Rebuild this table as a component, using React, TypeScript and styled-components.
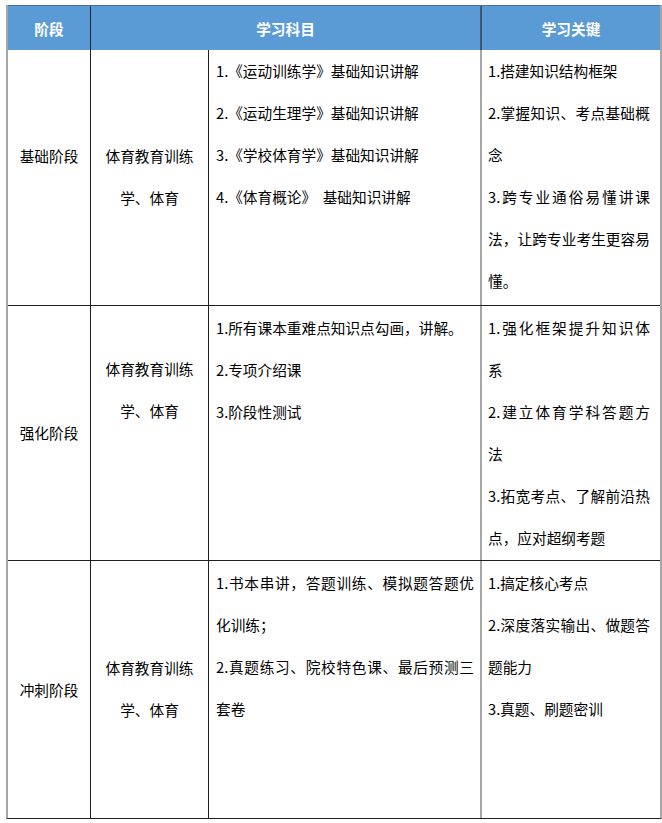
import React from "react";
import styled, { createGlobalStyle } from "styled-components";

const GlobalStyle = createGlobalStyle`
  html, body {
    margin: 0;
    padding: 0;
    background: #ffffff;
  }
  body {
    font-family: "Noto Sans CJK SC", "Noto Sans", sans-serif;
    color: #000000;
  }
  * { box-sizing: border-box; }
`;

const Sheet = styled.div`
  margin: 5px 0 0 6px;
  width: 656px;
  border-left: 2px solid #a6a6a6;
  border-right: 2px solid #a6a6a6;
  border-bottom: 1px solid #1f1f1f;
  font-size: 14.67px;
`;

const HeaderRow = styled.div`
  display: grid;
  grid-template-columns: 82px 390px 180px;
  height: 45px;
  background: #5b9bd5;
  border-top: 1px solid #41719c;
`;

const HeaderCell = styled.div<{ $divider?: "dark" | "slate" }>`
  display: flex;
  align-items: center;
  justify-content: center;
  color: #ffffff;
  font-weight: 700;
  font-size: 14.67px;
  border-left: ${(p) =>
    p.$divider === "dark"
      ? "1px solid #1f2a36"
      : p.$divider === "slate"
      ? "2px solid #44546a"
      : "none"};
`;

const BodyRow = styled.div<{ $h: number; $last?: boolean }>`
  display: grid;
  grid-template-columns: 82px 118px 272px 180px;
  height: ${(p) => p.$h}px;
  border-bottom: ${(p) => (p.$last ? "none" : "1px solid #1f1f1f")};
`;

const StageCell = styled.div<{ $top: number }>`
  padding-top: ${(p) => p.$top}px;
  line-height: 42px;
  text-align: center;
`;

const SubjectCell = styled.div<{ $top: number }>`
  padding-top: ${(p) => p.$top}px;
  line-height: 42px;
  text-align: center;
  border-left: 1px solid #1f1f1f;
`;

const ListCell = styled.div<{ $top: number; $key?: boolean }>`
  padding-top: ${(p) => p.$top}px;
  padding-left: ${(p) => (p.$key ? 6 : 7)}px;
  padding-right: ${(p) => (p.$key ? 10 : 6)}px;
  line-height: 42px;
  border-left: ${(p) =>
    p.$key ? "2px solid #a6a6a6" : "1px solid #1f1f1f"};
`;

const Line = styled.div<{ $justify?: boolean }>`
  white-space: pre;
  text-align: ${(p) => (p.$justify ? "justify" : "left")};
  text-align-last: ${(p) => (p.$justify ? "justify" : "left")};
  text-justify: inter-character;
  ${(p) => (p.$justify ? "white-space: normal;" : "")}
`;

type L = [string, boolean?];

interface RowData {
  h: number;
  last?: boolean;
  stage: string;
  stageTop: number;
  subjectTop: number;
  listTop: number;
  subjects: L[];
  keys: L[];
}

const rows: RowData[] = [
  {
    h: 256,
    stage: "基础阶段",
    stageTop: 85,
    subjectTop: 85,
    listTop: 0,
    subjects: [
      ["1.《运动训练学》基础知识讲解"],
      ["2.《运动生理学》基础知识讲解"],
      ["3.《学校体育学》基础知识讲解"],
      ["4.《体育概论》  基础知识讲解"],
    ],
    keys: [
      ["1.搭建知识结构框架"],
      ["2.掌握知识、考点基础概", true],
      ["念"],
      ["3.跨专业通俗易懂讲课", true],
      ["法，让跨专业考生更容易", true],
      ["懂。"],
    ],
  },
  {
    h: 255,
    stage: "强化阶段",
    stageTop: 106,
    subjectTop: 42,
    listTop: 1,
    subjects: [
      ["1.所有课本重难点知识点勾画，讲解。"],
      ["2.专项介绍课"],
      ["3.阶段性测试"],
    ],
    keys: [
      ["1.强化框架提升知识体", true],
      ["系"],
      ["2.建立体育学科答题方", true],
      ["法"],
      ["3.拓宽考点、了解前沿热", true],
      ["点，应对超纲考题"],
    ],
  },
  {
    h: 257,
    last: true,
    stage: "冲刺阶段",
    stageTop: 108,
    subjectTop: 86,
    listTop: 1,
    subjects: [
      ["1.书本串讲，答题训练、模拟题答题优", true],
      ["化训练；"],
      ["2.真题练习、院校特色课、最后预测三", true],
      ["套卷"],
    ],
    keys: [
      ["1.搞定核心考点"],
      ["2.深度落实输出、做题答", true],
      ["题能力"],
      ["3.真题、刷题密训"],
    ],
  },
];

export default function App() {
  return (
    <>
      <GlobalStyle />
      <Sheet>
        <HeaderRow>
          <HeaderCell>阶段</HeaderCell>
          <HeaderCell $divider="dark">学习科目</HeaderCell>
          <HeaderCell $divider="slate">学习关键</HeaderCell>
        </HeaderRow>
        {rows.map((r) => (
          <BodyRow key={r.stage} $h={r.h} $last={r.last}>
            <StageCell $top={r.stageTop}>{r.stage}</StageCell>
            <SubjectCell $top={r.subjectTop}>
              <div>体育教育训练</div>
              <div>学、体育</div>
            </SubjectCell>
            <ListCell $top={r.listTop}>
              {r.subjects.map(([t, j], i) => (
                <Line key={i} $justify={j}>
                  {t}
                </Line>
              ))}
            </ListCell>
            <ListCell $top={r.listTop} $key>
              {r.keys.map(([t, j], i) => (
                <Line key={i} $justify={j}>
                  {t}
                </Line>
              ))}
            </ListCell>
          </BodyRow>
        ))}
      </Sheet>
    </>
  );
}
